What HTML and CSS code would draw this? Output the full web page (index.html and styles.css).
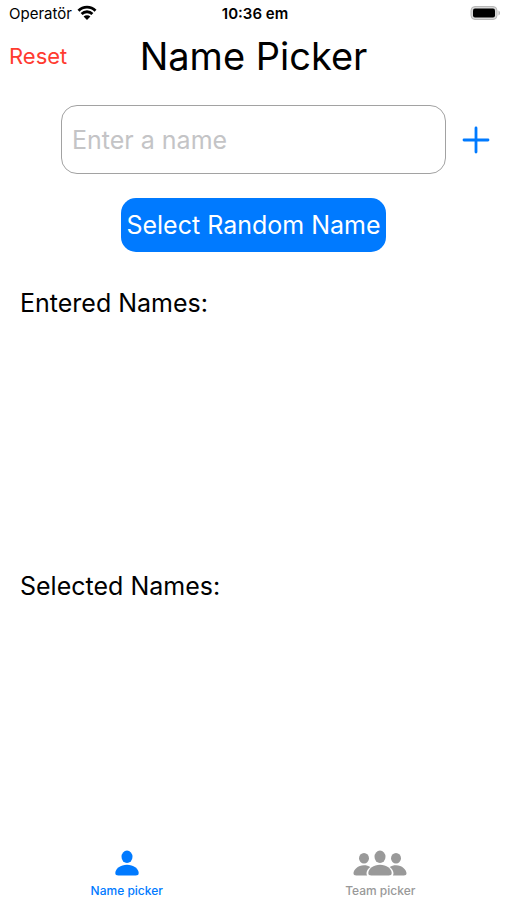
FILE: index.html
```html
<!DOCTYPE html>
<html lang="en">
<head>
<meta charset="utf-8">
<meta name="viewport" content="width=device-width, initial-scale=1">
<title>Name Picker</title>
<link rel="stylesheet" href="styles.css">
</head>
<body>
<div class="app">
  <div class="status">
    <div class="carrier">
      <span>Operatör</span>
      <svg class="wifi" width="20" height="16" viewBox="0 0 20 16" aria-hidden="true">
        <path d="M1.500 5.700a12 12 0 0 1 17 0M4.600 9a7.600 7.600 0 0 1 10.800 0" fill="none" stroke="currentColor" stroke-width="2.800"/>
        <path d="M10 15 6.600 11.600a4.800 4.800 0 0 1 6.800 0Z" fill="currentColor"/>
      </svg>
    </div>
    <div class="time">10:36 em</div>
    <svg class="battery" width="32" height="16" viewBox="0 0 32 16" aria-hidden="true">
      <rect x="2" y="1.500" width="26" height="13" rx="4" fill="#d8d8d8" stroke="#b8b8b8" stroke-width="1"/>
      <rect x="4" y="3.500" width="22" height="9" rx="2" fill="#000"/>
      <path d="M29.500 5.500a2.800 2.800 0 0 1 0 5Z" fill="#b4b4b4"/>
    </svg>
  </div>
  <header class="header">
    <button class="reset" type="button">Reset</button>
    <h1 class="title">Name Picker</h1>
  </header>
  <main class="main">
    <form class="entry">
      <input class="field" type="text" placeholder="Enter a name" aria-label="Enter a name">
      <button class="add" type="button" aria-label="Add name">
        <svg width="28" height="28" viewBox="0 0 28 28" aria-hidden="true">
          <path d="M14 2v24M2 14h24" fill="none" stroke="currentColor" stroke-width="2.800" stroke-linecap="round"/>
        </svg>
      </button>
    </form>
    <button class="select" type="button">Select Random Name</button>
    <div class="lists">
      <section class="list"><h2 class="label">Entered Names:</h2></section>
      <section class="list"><h2 class="label">Selected Names:</h2></section>
    </div>
  </main>
  <nav class="tabs">
    <a class="tab active" href="#names">
      <svg width="24" height="26" viewBox="0 0 24 26" aria-hidden="true" fill="currentColor">
        <ellipse cx="12" cy="6.800" rx="5.500" ry="6.200"/>
        <path d="M12 14.800c6.400 0 11.700 4.200 11.700 8.200 0 1.800-1.200 2.500-3 2.500H3.300c-1.800 0-3-.7-3-2.500 0-4 5.300-8.200 11.700-8.200Z"/>
      </svg>
      <span>Name picker</span>
    </a>
    <a class="tab" href="#teams">
      <svg width="54" height="26" viewBox="0 0 54 26" aria-hidden="true" fill="currentColor">
        <ellipse cx="27" cy="6.800" rx="5.500" ry="6.200"/>
        <ellipse cx="11" cy="8.200" rx="5" ry="5.300"/>
        <ellipse cx="43" cy="8.200" rx="5" ry="5.300"/>
        <path d="M27 14.800c6.400 0 11.700 4.200 11.700 8.200 0 1.800-1.200 2.500-3 2.500H18.300c-1.800 0-3-.7-3-2.500 0-4 5.300-8.200 11.700-8.200Z"/>
        <path id="side" d="M11 15.200c2.500 0 4.500.6 6.200 1.700-2.300 1.700-3.700 4-3.700 6.400 0 .9.200 1.600.6 2.200H3.200C1.500 25.500.5 24.800.5 23.300c0-3.700 4.500-8.100 10.500-8.100Z"/>
        <use href="#side" transform="matrix(-1 0 0 1 54 0)"/>
      </svg>
      <span>Team picker</span>
    </a>
  </nav>
</div>
</body>
</html>
```

FILE: styles.css
```css
* {
  box-sizing: border-box;
}

body {
  margin: 0;
  background: #fff;
  color: #000;
  font-family: Inter, "Liberation Sans", sans-serif;
}

button {
  border: 0;
  padding: 0;
  background: none;
  font: inherit;
  cursor: pointer;
}

svg {
  display: block;
}

.app {
  display: flex;
  flex-direction: column;
  min-height: 100vh;
}

.status {
  display: grid;
  grid-template-columns: 1fr auto 1fr;
  align-items: center;
  height: 26px;
  padding: 0 6px 0 9px;
  font-size: 15px;
}

.carrier {
  display: flex;
  align-items: center;
  gap: 5px;
}

.time {
  font-weight: 600;
}

.battery {
  justify-self: end;
}

.header {
  display: grid;
  grid-template-columns: 1fr auto 1fr;
  align-items: center;
  height: 60px;
  padding: 0 9px;
}

.reset {
  justify-self: start;
  color: #ff3b30;
  font-size: 22px;
}

.title {
  margin: 0;
  font-size: 38px;
  font-weight: 400;
}

.main {
  display: flex;
  flex: 1;
  flex-direction: column;
}

.entry {
  display: flex;
  align-items: center;
  gap: 16px;
  margin: 19px 17px 24px 61px;
}

.field {
  flex: 1;
  min-width: 0;
  height: 69px;
  padding: 0 10px;
  border: 1px solid #a2a2a2;
  border-radius: 16px;
  background: #fff;
  color: #000;
  font: inherit;
  font-size: 25px;
}

.field::placeholder {
  color: #c4c4c6;
  opacity: 1;
}

.add {
  color: #007aff;
}

.select {
  align-self: center;
  height: 54px;
  padding: 0 5px;
  border-radius: 15px;
  background: #007aff;
  color: #fff;
  font-size: 25px;
}

.lists {
  display: flex;
  flex: 1;
  flex-direction: column;
  gap: 3px;
  margin-top: 35px;
  padding: 0 20px;
}

.list {
  flex: 1;
}

.label {
  margin: 0;
  font-size: 25px;
  font-weight: 400;
  line-height: 32px;
}

.tabs {
  display: flex;
  height: 50px;
}

.tab {
  display: flex;
  flex: 1;
  flex-direction: column;
  align-items: center;
  gap: 7px;
  color: #999;
  font-size: 12px;
  font-weight: 500;
  line-height: 16px;
  text-decoration: none;
}

.active {
  color: #007aff;
}
```
